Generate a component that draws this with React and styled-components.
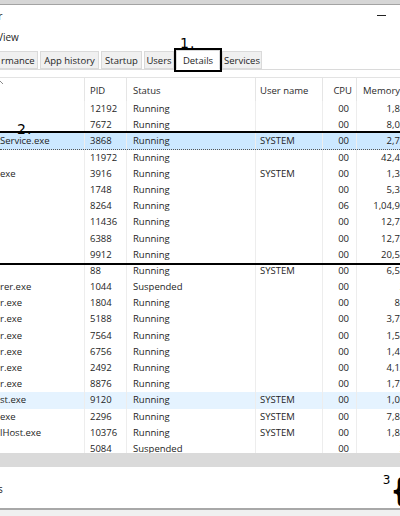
import styled, { createGlobalStyle } from "styled-components";

const GlobalStyle = createGlobalStyle`
  html, body {
    margin: 0;
    padding: 0;
    background: #ffffff;
    overflow: hidden;
  }
  body {
    font-family: "Open Sans", "Noto Sans", sans-serif;
    color: #1e1e1e;
  }
`;

const Page = styled.div`
  width: 400px;
  height: 516px;
  overflow: hidden;
  display: flex;
  flex-direction: column;
  background: #fff;
`;

const TopStrip = styled.div`
  height: 4px;
  background: #d6d6d6;
  border-bottom: 1px solid #a3a3a3;
  flex-shrink: 0;
`;

const TitleBar = styled.div`
  height: 23px;
  display: flex;
  align-items: center;
  justify-content: space-between;
  font-size: 11px;
  flex-shrink: 0;
`;

const Title = styled.span`
  margin-left: -2px;
  margin-top: -2px;
`;

const Minimize = styled.span`
  width: 9px;
  height: 1px;
  background: #222;
  margin-right: 14px;
  margin-top: -2px;
`;

const MenuBar = styled.div`
  height: 20px;
  display: flex;
  align-items: center;
  font-size: 10px;
  flex-shrink: 0;
`;

const MenuItem = styled.span`
  margin-left: -3px;
  margin-top: -3px;
`;

const TabStrip = styled.div`
  position: relative;
  margin-top: 3px;
  height: 18px;
  display: flex;
  gap: 2px;
  border-bottom: 1px solid #dadada;
  flex-shrink: 0;
`;

const Tab = styled.div`
  width: ${(p) => p.w}px;
  height: ${(p) => (p.active ? 20 : 18)}px;
  margin-top: ${(p) => (p.active ? -1 : 0)}px;
  box-sizing: border-box;
  display: flex;
  align-items: center;
  justify-content: ${(p) => (p.cut ? "flex-start" : "center")};
  padding-left: ${(p) => (p.cut ? 1 : 0)}px;
  font-size: 9.5px;
  white-space: nowrap;
  overflow: hidden;
  background: ${(p) => (p.active ? "#ffffff" : "#f0f0f0")};
  border: 1px solid #dadada;
  border-left-width: ${(p) => (p.cut ? 0 : 1)}px;
  border-bottom-color: ${(p) => (p.active ? "#ffffff" : "#dadada")};
  outline: ${(p) => (p.marked ? "2px solid #000" : "none")};
  outline-offset: 0;
  z-index: ${(p) => (p.active ? 1 : 0)};
`;

const Note = styled.span`
  position: absolute;
  left: ${(p) => p.x}px;
  top: ${(p) => p.y}px;
  font-family: "DejaVu Sans", sans-serif;
  font-size: 14px;
  letter-spacing: 1px;
  color: #000;
  line-height: 1;
  z-index: 3;
`;

const Panel = styled.div`
  margin-top: 7px;
  border-top: 1px solid #e3e3e3;
  flex: 1;
  min-height: 0;
  display: flex;
  flex-direction: column;
  overflow: hidden;
`;

const Grid = styled.div`
  display: grid;
  grid-template-columns: 85px 42px 129px 67px 34px 73px;
  width: 430px;
`;

const HeaderRow = styled(Grid)`
  height: 23px;
  flex-shrink: 0;
`;

const HeadCell = styled.div`
  position: relative;
  box-sizing: border-box;
  border-right: 1px solid #e5e5e5;
  padding: 5px ${(p) => (p.right ? 4 : 0)}px 0 ${(p) => p.pad || 0}px;
  line-height: 16px;
  font-size: 9.5px;
  color: #2a2a2a;
  text-align: ${(p) => (p.right ? "right" : "left")};
  white-space: nowrap;
  overflow: hidden;
`;

const SortArrow = styled.svg`
  position: absolute;
  left: -6px;
  top: 1px;
`;

const Body = styled.div`
  flex: 1;
  min-height: 0;
  overflow: hidden;
`;

const Marked = styled.div`
  position: relative;
  box-shadow: 0 -2px 0 #000, 0 2px 0 #000;
  z-index: 2;
`;

const Row = styled(Grid)`
  height: 16.2px;
  box-sizing: border-box;
  background: ${(p) =>
    p.selected ? "#cce8ff" : p.hover ? "#e5f3ff" : "transparent"};
  border-bottom: ${(p) => (p.selected ? "1px dotted #555" : "none")};
`;

const Cell = styled.div`
  box-sizing: border-box;
  border-right: 1px solid #ededed;
  padding: 0 ${(p) => p.padR || 0}px 0 ${(p) => p.pad || 0}px;
  line-height: 16.2px;
  font-size: 9.5px;
  text-align: ${(p) => (p.right ? "right" : "left")};
  white-space: nowrap;
  overflow: hidden;
`;

const ScrollBar = styled.div`
  height: 14px;
  background: #dadada;
  flex-shrink: 0;
`;

const Footer = styled.div`
  height: 41px;
  display: flex;
  align-items: center;
  justify-content: space-between;
  font-size: 10px;
  overflow: hidden;
  flex-shrink: 0;
`;

const FooterText = styled.span`
  margin-left: -2px;
  margin-top: 2px;
`;

const Marker = styled.div`
  display: flex;
  align-items: flex-start;
  margin-right: -9px;
  color: #000;
`;

const MarkerNum = styled.span`
  font-family: "DejaVu Sans", sans-serif;
  font-size: 12px;
  margin-top: 0px;
`;

const Brace = styled.span`
  font-family: "DejaVu Sans", sans-serif;
  font-size: 26px;
  font-weight: bold;
  line-height: 1;
  margin-left: 0px;
  margin-top: 4px;
  transform: scaleY(1.2);
`;

const BottomLine = styled.div`
  height: 2px;
  background: #a8a8a8;
  flex-shrink: 0;
`;

const BottomTail = styled.div`
  height: 6px;
  background: #f0f0f0;
  flex-shrink: 0;
`;

const tabs = [
  { label: "rmance", w: 38, cut: true },
  { label: "App history", w: 59 },
  { label: "Startup", w: 41 },
  { label: "Users", w: 30 },
  { label: "Details", w: 44, active: true, marked: true },
  { label: "Services", w: 40 },
];

// name, pid, status, user, cpu, visible memory
const rows = [
  ["", "12192", "Running", "", "00", "1,8"],
  ["", "7672", "Running", "", "00", "8,0"],
  ["Service.exe", "3868", "Running", "SYSTEM", "00", "2,7"],
  ["", "11972", "Running", "", "00", "42,4"],
  ["exe", "3916", "Running", "SYSTEM", "00", "1,3"],
  ["", "1748", "Running", "", "00", "5,3"],
  ["", "8264", "Running", "", "06", "1,04,9"],
  ["", "11436", "Running", "", "00", "12,7"],
  ["", "6388", "Running", "", "00", "12,7"],
  ["", "9912", "Running", "", "00", "20,5"],
  ["", "88", "Running", "SYSTEM", "00", "6,5"],
  ["rer.exe", "1044", "Suspended", "", "00", ""],
  ["r.exe", "1804", "Running", "", "00", "8"],
  ["r.exe", "5188", "Running", "", "00", "3,7"],
  ["r.exe", "7564", "Running", "", "00", "1,5"],
  ["r.exe", "6756", "Running", "", "00", "1,4"],
  ["r.exe", "2492", "Running", "", "00", "4,1"],
  ["r.exe", "8876", "Running", "", "00", "1,7"],
  ["st.exe", "9120", "Running", "SYSTEM", "00", "1,0"],
  ["exe", "2296", "Running", "SYSTEM", "00", "7,8"],
  ["lHost.exe", "10376", "Running", "SYSTEM", "00", "1,8"],
  ["", "5084", "Suspended", "", "00", ""],
];

const ProcRow = ({ r, selected, hover }) => (
  <Row selected={selected} hover={hover}>
    <Cell>{r[0]}</Cell>
    <Cell pad={5}>{r[1]}</Cell>
    <Cell pad={6}>{r[2]}</Cell>
    <Cell pad={4}>{r[3]}</Cell>
    <Cell right padR={7}>{r[4]}</Cell>
    <Cell right padR={10}>{r[5] + "36 K"}</Cell>
  </Row>
);

export default function App() {
  const before = rows.slice(0, 2);
  const marked = rows.slice(2, 10);
  const after = rows.slice(10);

  return (
    <>
      <GlobalStyle />
      <Page>
        <TopStrip />
        <TitleBar>
          <Title>r</Title>
          <Minimize />
        </TitleBar>
        <MenuBar>
          <MenuItem>View</MenuItem>
        </MenuBar>
        <TabStrip>
          {tabs.map((t) => (
            <Tab key={t.label} {...t}>
              {t.label}
            </Tab>
          ))}
          <Note x={180} y={-15}>1.</Note>
        </TabStrip>
        <Panel>
          <HeaderRow>
            <HeadCell>
              <SortArrow width="10" height="6" viewBox="0 0 10 6">
                <path d="M1 5 L5 1 L9 5" fill="none" stroke="#8a8a8a" strokeWidth="1" />
              </SortArrow>
            </HeadCell>
            <HeadCell pad={5}>PID</HeadCell>
            <HeadCell pad={6}>Status</HeadCell>
            <HeadCell pad={4}>User name</HeadCell>
            <HeadCell right>CPU</HeadCell>
            <HeadCell pad={6}>Memory (private working set)</HeadCell>
          </HeaderRow>
          <Body>
            {before.map((r) => (
              <ProcRow key={r[1]} r={r} />
            ))}
            <Marked>
              <Note x={17} y={-11}>2.</Note>
              {marked.map((r) => (
                <ProcRow key={r[1]} r={r} selected={r[1] === "3868"} />
              ))}
            </Marked>
            {after.map((r) => (
              <ProcRow key={r[1]} r={r} hover={r[1] === "9120"} />
            ))}
          </Body>
          <ScrollBar />
          <Footer>
            <FooterText>s</FooterText>
            <Marker>
              <MarkerNum>3</MarkerNum>
              <Brace>{"{"}</Brace>
            </Marker>
          </Footer>
          <BottomLine />
          <BottomTail />
        </Panel>
      </Page>
    </>
  );
}
